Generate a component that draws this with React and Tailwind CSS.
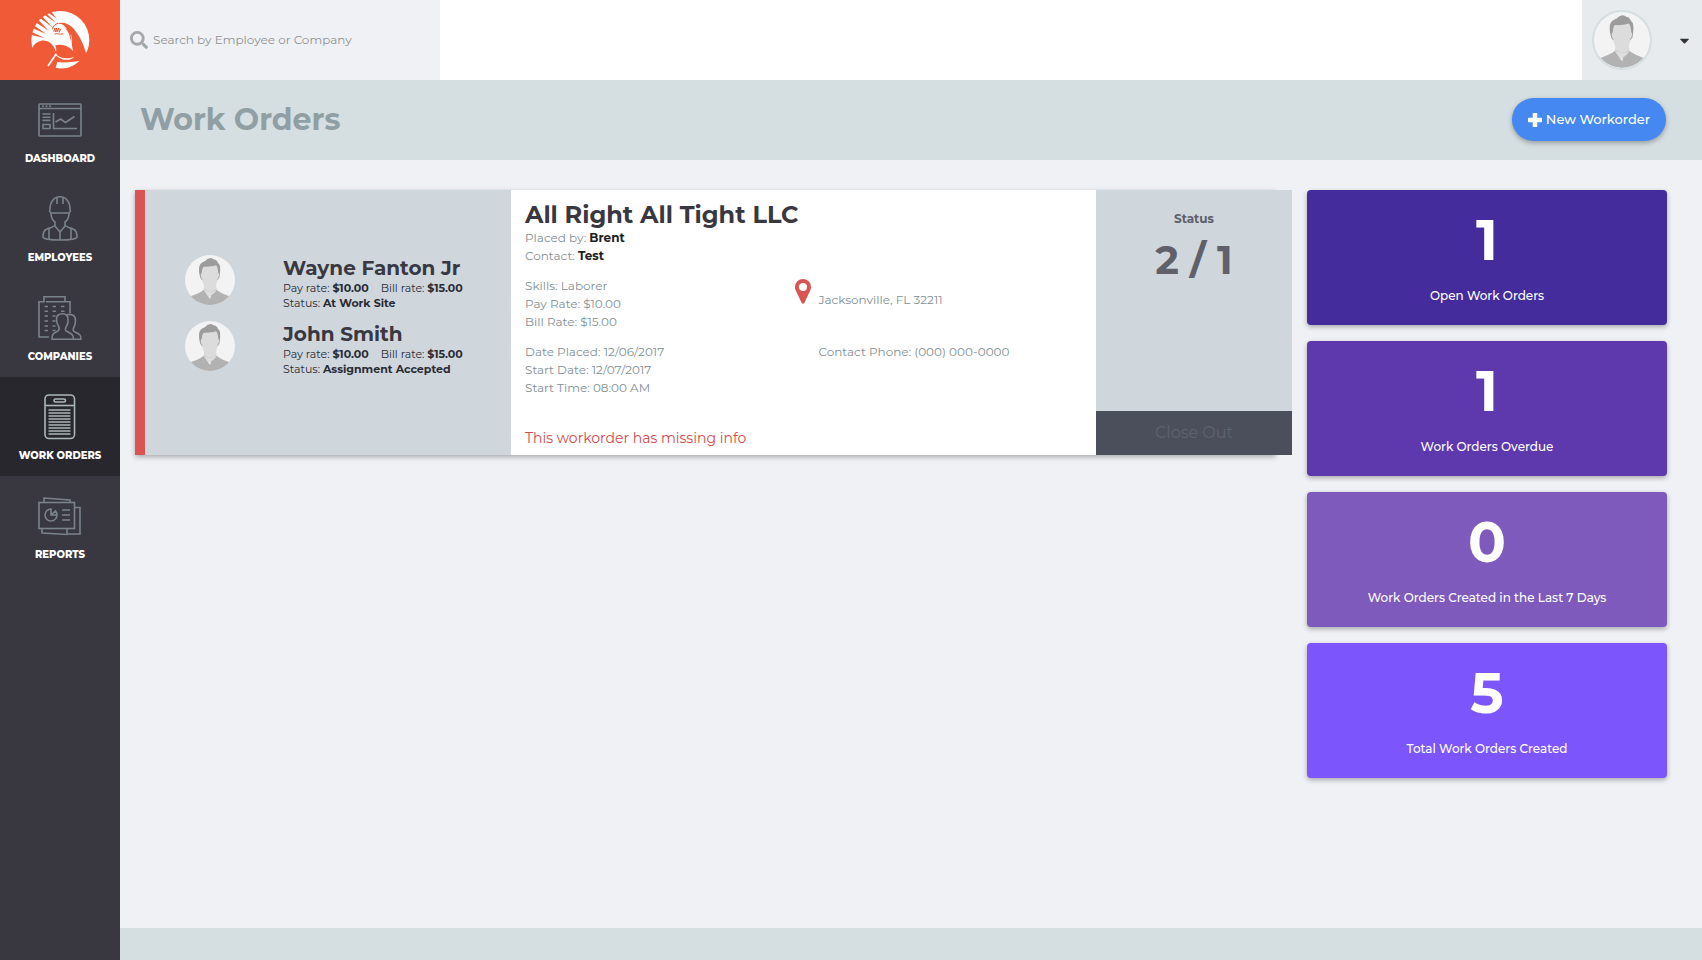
import React from "react";
import { FaSearch, FaCaretDown } from "react-icons/fa";

function Logo() {
  return (
    <svg viewBox="0 0 240 240" className="size-20" aria-hidden="true">
      <circle cx="121" cy="120" r="87" fill="#fff" />
      <g fill="#f15a36">
        <path d="M112 70c16-5 32-1 45 12 21 24 33 48 41 78l-38 2c-3-25-8-45-14-62l-10-16c-6-8-14-12-24-14z" />
        <path d="M28 150l10-8c12-22 37-25 52-14q13 9 18 29 2-11-2-21c19-6 44 2 56 21l50 1v55H28z" />
        <path d="M52 56l34 36-42-27zM63 46l36 37-42-31zM76 37l32 32-39-28zM90 30l20 26-28-21zM40 75l40 28-44-19zM30 94l44 20-44-10z" />
      </g>
      <g fill="none" stroke="#f15a36" strokeWidth="3">
        <path d="M97 88c3-11 8-15 17-18M101 95l4-11 1 12 4-12 1 12 5-12 2 13 4-10M104 102c6-4 15 4 26-1" />
      </g>
      <g fill="none" stroke="#fff">
        <path d="M116 74c10-2 18 3 23 12M124 92l8 4 10-3" strokeWidth="3" />
        <path d="M152 104c4 9 3 20 2 32" strokeWidth="2" />
        <path d="M84 198l25-37" strokeWidth="5" />
      </g>
      <path fill="#fff" d="M107 162c12 13 34 17 56 8-14 14-38 12-54-3zM112 186c22 3 42 0 66-3-17 17-43 27-71 20z" />
    </svg>
  );
}

function Avatar({ className }) {
  return (
    <svg viewBox="0 0 150 150" className={className} role="img" aria-label="Profile photo">
      <defs>
        <clipPath id="face-circle">
          <circle cx="75" cy="75" r="75" />
        </clipPath>
      </defs>
      <g clipPath="url(#face-circle)">
        <path fill="#f3f3f3" d="M0 0h150v150H0z" />
        <path fill="#b2b2b2" d="M0 150v-22c18-4 45-14 56-24 5 8 12 12 19 18 8-6 15-10 20-18 11 10 37 20 55 24v22z" />
        <path fill="#dedede" d="M57 88h37v17c-4 8-10 13-18 17l-2 10-17-26z" />
        <path fill="#cfcfcf" d="M57 98c10 14 28 14 37 0v6c-9 8-28 8-37 0z" />
        <path fill="#e6e6e6" d="M72 122h7l-4 11z" />
        <path
          fill="#9c9c9c"
          d="M46 68c-4-14-6-31-1-39 4-7 11-9 17-12 2-4 7-6 15-8 3 1 8 1 8 4 7 0 11 4 14 11 7 4 9 17 4 44l-6 8H51z"
        />
        <path fill="#dcdcdc" d="M50 55c1-10 2-16 6-20 12 1 25 0 37-4 5 4 6 14 7 24 4-1 2 14-3 18-2 19-10 34-22 34S54 92 52 73c-5-4-6-19-2-18z" />
      </g>
    </svg>
  );
}

const PlusIcon = () => (
  <svg viewBox="0 0 14 14" className="size-[14px]" fill="currentColor" aria-hidden="true">
    <path d="M5.500 0h3a.8.8 0 0 1 .8.8v3.900h3.900a.8.8 0 0 1 .8.8v3a.8.8 0 0 1-.8.8H9.300v3.900a.8.8 0 0 1-.8.8h-3a.8.8 0 0 1-.8-.8V9.300H.8a.8.8 0 0 1-.8-.8v-3a.8.8 0 0 1 .8-.8h3.900V.8a.8.8 0 0 1 .8-.8z" />
  </svg>
);

const PinIcon = () => (
  <svg viewBox="0 0 16 25" className="h-[25px] w-4 shrink-0" fill="#d95453" aria-hidden="true">
    <path
      fillRule="evenodd"
      d="M8 0a8 8 0 0 1 8 8c0 1.500-.3 2.500-.8 3.600L9.300 24.100a1.500 1.500 0 0 1-2.600 0L.8 11.600C.3 10.500 0 9.500 0 8a8 8 0 0 1 8-8zm0 4a4 4 0 1 0 0 8 4 4 0 0 0 0-8z"
    />
  </svg>
);

function NavSvg({ children }) {
  return (
    <svg viewBox="0 0 46 46" className="size-[46px]" fill="none" stroke="currentColor" strokeWidth="1.6" aria-hidden="true">
      {children}
    </svg>
  );
}

const DashboardIcon = () => (
  <NavSvg>
    <rect x="2" y="7" width="42" height="32" rx="1" />
    <path d="M2 11.5h42M5 9.2h2m1.5 0h2m1.5 0h2" />
    <path d="M5.5 17h8M5.5 20.2h8M5.5 23.4h8M6 27.5h7v4H6zM16.5 16v15.5H40" />
    <path d="M18.5 25l5-3 5 3.500 9-6" />
  </NavSvg>
);

const EmployeesIcon = () => (
  <NavSvg>
    <path d="M13 13.500C13 5.500 17 .8 23 .8s10 4.700 10 12.700M20 1.500v6.500M26 1.500v6.500M13 13c-1 2 0 4 2 4h16c2 0 3-2 2-4" />
    <path d="M14 17c0 4 1 7 4 9v3c-1 2-4 2.500-8 4-3 1-4 4-4 8 1 4 33 4 34 0 0-4-1-7-4-8-4-1.500-7-2-8-4v-3c3-2 4-5 4-9" />
    <path d="M12 32v11.500M34 32v11.500M17.500 29.500L23 36l5.500-6.500M23 36v8" />
  </NavSvg>
);

const CompaniesIcon = () => (
  <NavSvg>
    <path d="M12 42H2V6.800h5V1.700h21v5h5V18M9 6.800h20" />
    <path d="M7.500 11.500h3.500M15.500 11.500h3.500M24 11.500h3.500M7.500 16.300h3.500M15.500 16.300h3.500M24 16.300h3.500M7.500 21h3.500M15.500 21h3M7.500 26h3.500M15.500 26h3M7.500 31h3.500M15.500 31h3M7.500 35.500h3.500M15.500 35.500h3" />
    <path d="M15 44.200h21.500c0-4-1-5-7-8-2-1-1-3 0-5 2-3 1.500-4 1.500-7 0-4-2-5.500-5.500-5.500s-6 1.500-6 5.500c0 3 0 4 2 7 1 2 1 4-1 5-5 2-5.500 4-5.500 8z" />
    <path d="M29 20.500c5-2.500 9.500-.5 9.500 5 0 3 0 4-1.500 6.500s-1 4 1 5c4.500 2 6 3 6 7.200h-8" />
  </NavSvg>
);

const WorkOrdersIcon = () => (
  <NavSvg>
    <rect x="8" y="1" width="29.5" height="43.5" rx="4" />
    <path d="M8 11.5h29.5" />
    <rect x="17" y="5" width="11.5" height="3" rx="1.5" />
    <path d="M11.500 16h22M11.500 19h22M11.500 22h22M11.500 25h22M11.500 28h22M11.500 31h22M11.500 34h22M11.500 37h22M11.500 40h22" strokeWidth="1.3" />
  </NavSvg>
);

const ReportsIcon = () => (
  <NavSvg>
    <rect x="2" y="9.5" width="35.5" height="26" />
    <path d="M7 9.500V5l26 2v2.500M37.500 14.500H43V41H30M5 35.500v4.500l25 1.500v-6" />
    <path d="M14 16a6 6 0 1 0 6 6h-6zM14 22l4.500-4A6 6 0 0 1 20 22" />
    <path d="M25 17h8M25 22h8M25 27h8" />
  </NavSvg>
);

const NAV = [
  { label: "DASHBOARD", Icon: DashboardIcon },
  { label: "EMPLOYEES", Icon: EmployeesIcon },
  { label: "COMPANIES", Icon: CompaniesIcon },
  { label: "WORK ORDERS", Icon: WorkOrdersIcon, active: true },
  { label: "REPORTS", Icon: ReportsIcon },
];

const WORKERS = [
  { name: "Wayne Fanton Jr", pay: "$10.00", bill: "$15.00", status: "At Work Site" },
  { name: "John Smith", pay: "$10.00", bill: "$15.00", status: "Assignment Accepted" },
];

const STATS = [
  { value: 1, label: "Open Work Orders", color: "bg-[#452c9c]" },
  { value: 1, label: "Work Orders Overdue", color: "bg-[#5d39ad]" },
  { value: 0, label: "Work Orders Created in the Last 7 Days", color: "bg-[#7e5abd]" },
  { value: 5, label: "Total Work Orders Created", color: "bg-[#7c55fd]" },
];

function Sidebar() {
  return (
    <aside className="w-[120px] shrink-0 bg-[#393841]">
      <a href="#home" aria-label="Home" className="flex h-20 justify-center bg-[#f15a36]">
        <Logo />
      </a>
      <nav>
        {NAV.map(({ label, Icon, active }) => (
          <a
            key={label}
            href={"#" + label.toLowerCase().replace(" ", "-")}
            aria-current={active ? "page" : undefined}
            className={
              "flex h-[99px] flex-col items-center gap-2 pt-[17px] " +
              (active ? "bg-[#28272d] text-[#aab7b9]" : "text-[#7b828a]")
            }
          >
            <Icon />
            <span className="text-[10px] leading-4 font-extrabold text-white">{label}</span>
          </a>
        ))}
      </nav>
    </aside>
  );
}

function Worker({ name, pay, bill, status }) {
  return (
    <li className="flex items-start">
      <Avatar className="size-[50px] shrink-0" />
      <div className="ml-12 text-[11px] leading-[15px] text-[#2b2b33]">
        <h3 className="text-xl leading-[26px] font-bold text-[#393841]">{name}</h3>
        <p className="flex gap-3">
          <span>Pay rate: <b>{pay}</b></span>
          <span>Bill rate: <b>{bill}</b></span>
        </p>
        <p>Status: <b>{status}</b></p>
      </div>
    </li>
  );
}

function WorkOrderCard() {
  return (
    <article className="mr-4 flex min-h-[265px] min-w-0 shadow-[0_2px_5px_rgba(0,0,0,0.3)]">
      <ul className="flex w-[376px] shrink-0 flex-col justify-center gap-[10px] border-l-[10px] border-[#d95453] bg-[#cfd7dd] pb-[14px] pl-10">
        {WORKERS.map((w) => (
          <Worker key={w.name} {...w} />
        ))}
      </ul>
      <div className="flex min-w-0 flex-1 flex-col bg-white pt-[11px] pb-2 pl-[14px] text-xs leading-[18px] text-[#7f9095]">
        <h2 className="text-2xl leading-7 font-bold text-[#393841]">All Right All Tight LLC</h2>
        <p>Placed by: <b className="text-[#222]">Brent</b></p>
        <p>Contact: <b className="text-[#222]">Test</b></p>
        <div className="mt-3 grid grid-cols-2 gap-y-3 pr-8">
          <div>
            <p>Skills: Laborer</p>
            <p>Pay Rate: $10.00</p>
            <p>Bill Rate: $15.00</p>
          </div>
          <div className="flex gap-2 pt-[2px]">
            <PinIcon />
            <p className="pt-3">Jacksonville, FL 32211</p>
          </div>
          <div>
            <p>Date Placed: 12/06/2017</p>
            <p>Start Date: 12/07/2017</p>
            <p>Start Time: 08:00 AM</p>
          </div>
          <p className="pl-6">Contact Phone: (000) 000-0000</p>
        </div>
        <p className="mt-auto text-sm leading-[18px] text-[#d34a4a]">This workorder has missing info</p>
      </div>
      <div className="-mr-4 flex w-[196px] shrink-0 flex-col bg-[#cfd7dd] text-center font-bold text-[#5f606a]">
        <p className="pt-5 text-xs leading-[18px]">Status</p>
        <p className="pt-2 text-[40px] leading-12">2 / 1</p>
        <button type="button" className="mt-auto h-11 bg-[#4a4f5b] text-base font-normal text-[#5f626d]">
          Close Out
        </button>
      </div>
    </article>
  );
}

export default function App() {
  return (
    <div className="flex min-h-screen bg-[#f0f1f5] font-['Montserrat',Inter,sans-serif]">
      <Sidebar />
      <div className="flex min-w-0 flex-1 flex-col">
        <header className="flex h-20 justify-between bg-white">
          <label className="flex w-80 items-center gap-[5px] bg-[#f0f1f5] pl-[10px] text-[#a5a8a9]">
            <FaSearch className="size-[18px] shrink-0" />
            <input
              type="search"
              aria-label="Search by Employee or Company"
              placeholder="Search by Employee or Company"
              className="min-w-0 flex-1 bg-transparent text-xs outline-none placeholder:text-[#8f9192]"
            />
          </label>
          <button type="button" aria-label="Account menu" className="flex w-[120px] items-center justify-between bg-[#e7ebee] pr-[10px] pl-[10px]">
            <Avatar className="size-[60px] rounded-full border-2 border-[#d5dee0]" />
            <FaCaretDown className="size-[15px] text-[#333]" />
          </button>
        </header>
        <div className="flex h-20 items-center justify-between bg-[#d5dee0] pr-9 pb-px pl-5">
          <h1 className="text-3xl font-bold text-[#8f9fa4]">Work Orders</h1>
          <button
            type="button"
            className="flex h-[43px] w-[154px] items-center justify-center gap-1 rounded-full bg-[#4588f1] text-[13px] font-medium text-white shadow-[0_2px_5px_rgba(0,0,0,0.3)]"
          >
            <PlusIcon />
            New Workorder
          </button>
        </div>
        <main className="grid flex-1 grid-cols-[minmax(0,1fr)_360px] items-start gap-[15px] pt-[30px] pr-[35px] pb-8 pl-[15px]">
          <WorkOrderCard />
          <section aria-label="Statistics" className="flex flex-col gap-4">
            {STATS.map(({ value, label, color }) => (
              <div
                key={label}
                className={
                  "flex h-[135px] flex-col items-center gap-[15px] rounded-[4px] pt-[18px] text-white shadow-[0_2px_5px_rgba(0,0,0,0.3)] " + color
                }
              >
                <p className="text-[56px] leading-16 font-bold">{value}</p>
                <p className="text-xs leading-[18px] font-medium">{label}</p>
              </div>
            ))}
          </section>
        </main>
        <footer className="h-8 bg-[#d5dee0]" />
      </div>
    </div>
  );
}
